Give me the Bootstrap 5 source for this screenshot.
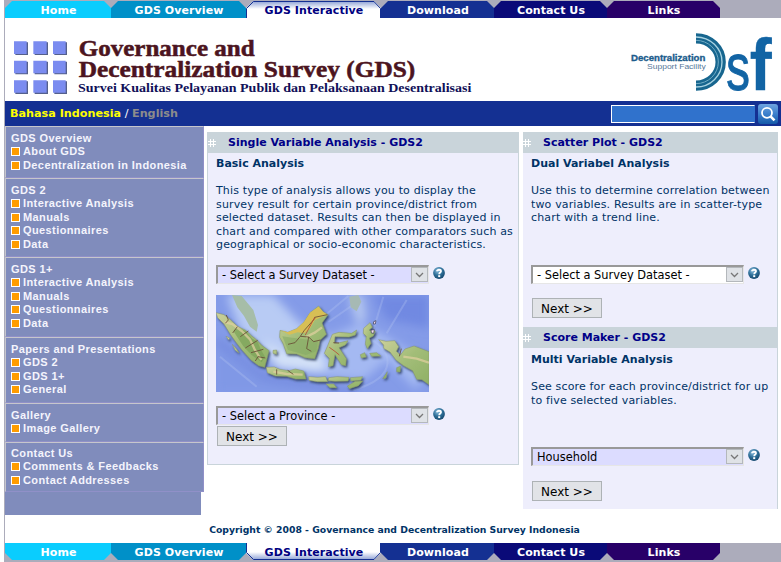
<!DOCTYPE html>
<html lang="en">
<head>
<meta charset="utf-8">
<meta name="viewport" content="width=device-width, initial-scale=1">
<title>Governance and Decentralization Survey</title>
<link rel="stylesheet" href="https://cdn.jsdelivr.net/npm/bootstrap@5.3.0/dist/css/bootstrap.min.css">
<style>
html,body{height:562px;overflow:hidden;background:#fff}
body{font-family:"DejaVu Sans",Verdana,sans-serif;font-size:11px;line-height:13.6px;color:#036}
.page{margin-left:4px;width:777px;height:562px;border-left:1px solid #acacbb}
.tabs{height:18px;background:#acacbb;padding-top:1px}
.tabs.top{height:18px}
.tabs.bottom{height:19px;padding-top:0}
.tab{height:17px;width:113px;font-weight:700;font-size:11px;line-height:19px;color:#fff;text-align:center;text-decoration:none;white-space:nowrap;letter-spacing:.08px;padding-left:1px;clip-path:polygon(0 7px,7px 0,calc(100% - 7px) 0,100% 7px,100% 100%,0 100%)}
.bottom .tab{clip-path:polygon(0 0,100% 0,100% calc(100% - 7px),calc(100% - 7px) 100%,7px 100%,0 calc(100% - 7px))}
.t1{width:106px;background:#0acdfe}.t2{width:135px;background:#0090c8}.t4{background:#143092}.t5{background:#0a0a78}.t6{background:#280068}
.t3{width:135px;color:#000080;background:linear-gradient(#8b9fd4,#fff 8px)}
.bottom .t3{background:linear-gradient(#fff 9px,#8b9fd4)}
.t3svg{position:absolute;left:0;top:0}
.head{height:83px}
.head svg{overflow:visible}
.bar{height:25px;background:#143092;font-size:11.2px}
.lang{padding:1px 0 0 5px}
.bar .yl{color:#ff0}.bar .gr{color:#8c8c8c}
.search{width:144px;height:18px;background:#3072cc;border:1px solid #fff;border-right-color:#3072cc;border-radius:0;padding:0;outline:0}
.srch{margin:0 3px}
.mid{height:389px}
.side{width:202px;font-family:"Liberation Sans",Arial,sans-serif;font-weight:700;color:#f4f4fc;letter-spacing:.4px}
.sec{width:199px;background:#808cbc;border:1px solid #c6c6cc;border-right-color:#9090c8;border-bottom:1px solid #9090c8;padding:4.500px 0 0 5px;line-height:13.600px;white-space:nowrap}
.sec a{display:flex;align-items:flex-start;color:inherit;text-decoration:none}
.sec a::before{content:"";width:9px;height:9px;margin-top:2px;border:1px solid #fff;background:#ff9c00;margin-right:3px}
.h52{height:52px}.h79{height:79px}.h80{height:80px}.h66{height:66px}.h39{height:39px}.h50{height:50px;padding-top:3.500px}
.tail{width:196px;height:23px;background:#808cbc}
.main-area{padding-top:6px}
.panel{background:#eeeefc;border:1px solid #c9d4da;border-width:0 1px 1px}
.p1{width:312px;height:333px}.p2{width:255px;border-left:0;border-bottom:0}
.p2a{height:195px}.p2b{height:182px}
.ttl{height:21px;background:#c9d4da;color:#000088;font-weight:700;font-size:11px;margin:0 -1px;padding-top:1px;line-height:20px;white-space:nowrap}
.p2 .ttl{margin:0}
.hash{width:8px;height:8px;margin:0 12px 0 1px}
.p2 .hash{margin-left:0}
.bd{padding-left:8px}
.sub{font-weight:700;font-size:11px;line-height:14px;padding-top:4px;height:31px;white-space:nowrap}
.copytext{height:81px;letter-spacing:.15px}
.p2b .sub{padding-top:5px;height:32px}
.p2b .copytext{height:67px}
.ln{display:block;white-space:nowrap}
.sel{width:213px;height:19px;border:1px solid #999;border-width:2px 1px 1px 2px;border-color:#999 #e6e6e6 #e6e6e6 #999;background:#dcdcff}
.sel.w{background:#fff}
.sel select{appearance:none;border:0;background:transparent;padding:0 0 0 4px;color:#000;font-size:11.400px;line-height:16px;height:16px;outline:0;min-width:0}
.arr{width:17px;height:15px;background:#dfe2e6;border:1px solid #b4b8bc}
.help{margin:2px 0 0 4px}
.map{margin:11px 0 14px}
.nx{width:70px;height:20px;border:1px solid #adb2b5;border-radius:0;background:#e1e3e7;color:#000;font-size:12px;line-height:18px;padding:1px 0 0;margin:1px 0 0 1px;display:block}
.nx2{margin-top:14px}
.p2b .nx2{margin-top:15px}
.copy{font-size:9.280px;font-weight:700;color:#036;white-space:nowrap;height:28px;padding:2px 0 0 3px}
</style>
<script src="https://cdn.jsdelivr.net/npm/bootstrap@5.3.0/dist/js/bootstrap.bundle.min.js"></script>
</head>
<body>
<svg width="0" height="0" class="position-absolute">
<defs>
<symbol id="hash" viewBox="0 0 8 8"><path d="M0 2.500h8M0 5.500h8M2.500 0v8M5.500 0v8" stroke="#fff" fill="none"/></symbol>
<radialGradient id="hg" cx=".4" cy=".3" r=".7"><stop offset="0" stop-color="#8fc0e0"/><stop offset=".55" stop-color="#2f7099"/><stop offset="1" stop-color="#164a70"/></radialGradient>
<symbol id="help" viewBox="0 0 12 12"><circle cx="6" cy="6" r="5.900" fill="url(#hg)"/><path d="M4 4.300C4 2.200 8 2.200 8 4.300C8 5.600 6.200 5.500 6.200 7.200" fill="none" stroke="#fff" stroke-width="1.800"/><rect x="5.200" y="8.200" width="2" height="1.900" fill="#fff"/></symbol>
<symbol id="chev" viewBox="0 0 15 13"><path d="M4 5l3.500 3.500L11 5" fill="none" stroke="#777" stroke-width="1.300"/></symbol>
</defs>
</svg>
<div class="page d-flex flex-column">
<nav class="tabs top d-flex">
<a class="tab t1">Home</a><a class="tab t2">GDS Overview</a><a class="tab t3 position-relative"><svg class="t3svg" width="135" height="17"><path d="M.5 17V7.500L7.500.5H128L134.500 7.500V17" fill="none" stroke="#143092"/></svg>GDS Interactive</a><a class="tab t4">Download</a><a class="tab t5">Contact Us</a><a class="tab t6">Links</a>
</nav>
<header class="head d-flex justify-content-between">
<svg width="475" height="83" viewBox="15 54 1425 249">
<path fill="#55608c" d="M46 127h38v38H46zM104 127h40v38h-40zM163 127h38v38h-38zM46 185h38v38H46zM104 185h40v38h-40zM163 185h38v38h-38zM46 244h38v38H46zM104 244h40v38h-40zM163 244h38v38h-38z"/>
<path fill="#7b8cf0" d="M42 124h38v38H42zM100 124h40v38h-40zM159 124h38v38h-38zM42 182h38v38H42zM100 182h40v38h-40zM159 182h38v38h-38zM42 241h38v37H42zM100 241h40v37h-40zM159 241h38v37h-38z"/>
<g font-family="Liberation Serif,Times New Roman,serif" font-weight="700">
<text x="236" y="167" font-size="68" textLength="528" lengthAdjust="spacingAndGlyphs" fill="#4c1420" stroke="#4c1420" stroke-width="1.500">Governance and</text>
<text x="236" y="231" font-size="68" textLength="1010" lengthAdjust="spacingAndGlyphs" fill="#4c1420" stroke="#4c1420" stroke-width="1.500">Decentralization Survey (GDS)</text>
<text x="234" y="276" font-size="38" textLength="1180" lengthAdjust="spacingAndGlyphs" fill="#101058">Survei Kualitas Pelayanan Publik dan Pelaksanaan Desentralisasi</text>
</g>
</svg>
<svg width="155" height="83" viewBox="735 54 465 249">
<text x="750" y="183" font-family="Liberation Sans,Arial,sans-serif" font-weight="700" font-size="26" textLength="223" lengthAdjust="spacingAndGlyphs" fill="#1c5c8c" stroke="#1c5c8c">Decentralization</text>
<text x="798" y="206" font-family="Liberation Sans,Arial,sans-serif" font-size="24" textLength="176" lengthAdjust="spacingAndGlyphs" fill="#56789a">Support Facility</text>
<g fill="none" stroke="#17668f"><path d="M945 115A74 71 0 0 1 945 257" stroke-width="31"/><path d="M945 111A78 75 0 0 1 945 261" stroke="#a9d3e2" stroke-width="4"/><path d="M945 121A67 65 0 0 1 945 251" stroke="#6fabc4" stroke-width="3"/></g>
<g font-family="Liberation Sans,Arial,sans-serif" fill="#1264a4" stroke="#1264a4"><text x="1036" y="271" font-size="200" textLength="71" lengthAdjust="spacingAndGlyphs" stroke-width="3">s</text><text x="1106" y="271" font-size="216" font-weight="700" textLength="66" lengthAdjust="spacingAndGlyphs">f</text></g>
</svg>
</header>
<div class="bar d-flex align-items-center">
<div class="fw-bold text-nowrap flex-grow-1 lang"><span class="yl">Bahasa Indonesia</span><span class="text-white fw-normal"> / </span><span class="gr">English</span></div>
<input class="search" aria-label="Search">
<svg width="20" height="20" viewBox="0 0 20 20" class="srch"><defs><linearGradient id="sg" x2="0" y2="1"><stop stop-color="#6fa4e0"/><stop offset=".5" stop-color="#3b7fcc"/><stop offset="1" stop-color="#145aa8"/></linearGradient></defs><rect width="20" height="20" rx="3" fill="url(#sg)"/><circle cx="9" cy="8.800" r="5" fill="none" stroke="#fff" stroke-width="1.800"/><path d="M12.500 12.300l4 4" stroke="#fff" stroke-width="2.600"/></svg>
</div>
<div class="d-flex mid">
<aside class="side">
<div class="sec h52">GDS Overview<a>About GDS</a><a>Decentralization in Indonesia</a></div>
<div class="sec h79">GDS 2<a>Interactive Analysis</a><a>Manuals</a><a>Questionnaires</a><a>Data</a></div>
<div class="sec h80">GDS 1+<a>Interactive Analysis</a><a>Manuals</a><a>Questionnaires</a><a>Data</a></div>
<div class="sec h66">Papers and Presentations<a>GDS 2</a><a>GDS 1+</a><a>General</a></div>
<div class="sec h39">Gallery<a>Image Gallery</a></div>
<div class="sec h50">Contact Us<a>Comments &amp; Feedbacks</a><a>Contact Addresses</a></div>
<div class="tail"></div>
</aside>
<main class="d-flex gap-1 align-items-start main-area">
<section class="panel p1">
<div class="ttl d-flex align-items-center"><svg class="hash"><use href="#hash"/></svg>Single Variable Analysis - GDS2</div>
<div class="bd">
<div class="sub">Basic Analysis</div>
<div class="copytext"><span class="ln">This type of analysis allows you to display the</span><span class="ln">survey result for certain province/district from</span><span class="ln">selected dataset. Results can then be displayed in</span><span class="ln">chart and compared with other comparators such as</span><span class="ln">geographical or socio-economic characteristics.</span></div>
<div class="d-flex"><div class="sel d-flex"><select class="flex-grow-1"><option>- Select a Survey Dataset -</option></select><svg class="arr"><use href="#chev"/></svg></div><svg width="12" height="12" class="help"><use href="#help"/></svg></div>
<svg width="213" height="97" viewBox="48 45 639 291" preserveAspectRatio="none" class="d-block map">
<defs><filter id="b" x="-20%" y="-20%" width="140%" height="140%"><feGaussianBlur stdDeviation="14"/></filter>
<filter id="ds" x="-10%" y="-10%" width="125%" height="125%"><feDropShadow dx="4" dy="5" stdDeviation="3" flood-color="#253556" flood-opacity=".85"/></filter>
<linearGradient id="land" x2="1" y2="1"><stop stop-color="#cdd09a"/><stop offset=".5" stop-color="#a2bd78"/><stop offset="1" stop-color="#8fb065"/></linearGradient></defs>
<rect x="48" y="45" width="639" height="291" fill="#849be8"/>
<g filter="url(#b)"><path d="M80 45L220 45L300 130L375 160L420 260L350 280L230 260L120 150Z" fill="#b8cbf4"/><path d="M190 180L250 220L380 230L400 280L230 265Z" fill="#d4e2f8"/><path d="M360 180L480 130L560 170L687 250L650 330L560 240L490 300L380 290Z" fill="#a4b9f2"/><path d="M445 45L490 45L500 120L470 130Z" fill="#b4c6f0"/><path d="M520 45h167v100L560 120Z" fill="#7189e2"/><path d="M48 160L180 270L340 336H48Z" fill="#8098e6"/><path d="M48 180L190 290L470 336" fill="none" stroke="#6e84dc" stroke-width="14"/></g>
<path d="M370 110L445 48M385 126L480 60M520 150L550 50M560 160L620 60M460 330C600 290 580 210 500 170M60 230L170 320" fill="none" stroke="#b7c7f3" stroke-width="6" opacity=".3"/>
<path d="M96 45L125 48L160 90L174 135L170 155L150 140L132 108L112 82Z" fill="#a6bda8"/>
<path d="M448 50L475 45L484 65L470 94L452 82Z" fill="#a6b9b4"/>
<g filter="url(#ds)" fill="url(#land)" stroke="#84946a" stroke-width="1.500">
<path d="M48 98L72 104L92 120L112 139L137 151L155 168L167 177L185 196L207 212L202 232L194 262L176 257L153 240L126 210L108 187L91 163L72 132L53 113Z"/>
<path d="M240 151L263 157L290 146L312 126L330 98L356 78L369 95L384 104L366 129L379 163L360 181L355 205L344 236L315 233L290 222L260 221L249 190L239 172Z"/>
<path d="M199 262L223 261L239 268L267 272L286 267L311 273L318 297L287 297L260 289L226 288L202 278Z"/>
<path d="M326 290L353 292L377 290L383 305L353 305L327 301ZM386 293L411 290L447 292L444 303L405 304L385 302ZM451 293L488 290L482 301L453 303ZM442 318L466 304L488 303L475 317L448 326ZM378 312L401 312L410 323L390 323Z"/>
<path d="M397 163L417 157L455 160L470 150L466 165L447 171L405 170L403 190L414 189L444 182L436 195L417 203L439 236L437 257L424 254L405 224L399 257L385 260L388 235L373 220L383 197Z"/>
<path d="M491 145L510 128L517 142L507 151L526 153L520 168L508 174L513 190L502 206L496 192L499 169L490 160Z"/>
<path d="M536 179L558 184L584 182L596 200L589 214L601 225L615 207L642 198L687 215V314L666 299L650 298L638 272L611 257L588 240L570 216L551 205L551 195Z"/>
<path d="M481 224L494 218L499 231L484 234ZM509 220L530 218L542 228L515 229ZM590 263L602 258L600 276L590 275ZM548 296L562 275L558 294ZM219 211L230 210V223L219 220ZM97 193L110 208L117 219L105 210ZM78 169L89 174L86 180Z"/>
</g>
<path d="M242 151L263 157L290 146L312 126L330 98L356 80L369 95L382 104L360 113L344 121L329 147L313 160L293 157L268 164Z" fill="#d8bf55"/>
<path d="M100 153L112 142L137 152L157 176L173 185L182 208L195 230L185 247L155 225L130 199Z" fill="#7ca35a" opacity=".75"/>
<path d="M247 169L276 173L304 176L354 184L349 214L318 225L264 210Z" fill="#86aa65" opacity=".6"/>
<path d="M74 126L97 132L125 153L150 178L164 208L184 240M610 230L650 236L687 248M220 275L260 282L308 284M318 171L344 158L366 142" fill="none" stroke="#ddcf9d" stroke-width="7" opacity=".75"/>
<g fill="none" stroke="#684b34" stroke-width="2.500"><path d="M79 105L85 120L76 130M112 140L98 159M121 170L145 153M136 204L173 181M153 218L190 208M166 243L174 230L196 234M264 193L285 188L301 169L326 171L341 185L361 180M301 169L313 151L344 116L344 112L382 104M326 171L320 206L334 214M263 271L280 283M230 268V284M604 206L598 229M400 188L417 189"/><path d="M388 202L406 215L418 225M344 112L316 165" stroke="#b94934"/></g>
<path d="M521 125L528 122L526 132L520 132ZM513 150L523 149L521 160L514 159Z" fill="#f4ddec" stroke="#343750" stroke-width="2"/>
</svg>
<div class="d-flex"><div class="sel d-flex"><select class="flex-grow-1"><option>- Select a Province -</option></select><svg class="arr"><use href="#chev"/></svg></div><svg width="12" height="12" class="help"><use href="#help"/></svg></div>
<button class="nx">Next &gt;&gt;</button>
</div>
</section>
<div>
<section class="panel p2 p2a">
<div class="ttl d-flex align-items-center"><svg class="hash"><use href="#hash"/></svg>Scatter Plot - GDS2</div>
<div class="bd">
<div class="sub">Dual Variabel Analysis</div>
<div class="copytext"><span class="ln">Use this to determine correlation between</span><span class="ln">two variables. Results are in scatter-type</span><span class="ln">chart with a trend line.</span></div>
<div class="d-flex"><div class="sel w d-flex"><select class="flex-grow-1"><option>- Select a Survey Dataset -</option></select><svg class="arr"><use href="#chev"/></svg></div><svg width="12" height="12" class="help"><use href="#help"/></svg></div>
<button class="nx nx2">Next &gt;&gt;</button>
</div>
</section>
<section class="panel p2 p2b">
<div class="ttl d-flex align-items-center"><svg class="hash"><use href="#hash"/></svg>Score Maker - GDS2</div>
<div class="bd">
<div class="sub">Multi Variable Analysis</div>
<div class="copytext"><span class="ln">See score for each province/district for up</span><span class="ln">to five selected variables.</span></div>
<div class="d-flex"><div class="sel d-flex"><select class="flex-grow-1"><option>Household</option></select><svg class="arr"><use href="#chev"/></svg></div><svg width="12" height="12" class="help"><use href="#help"/></svg></div>
<button class="nx nx2">Next &gt;&gt;</button>
</div>
</section>
</div>
</main>
</div>
<footer>
<div class="copy d-flex align-items-center justify-content-center">Copyright © 2008 - Governance and Decentralization Survey Indonesia</div>
<nav class="tabs bottom d-flex">
<a class="tab t1">Home</a><a class="tab t2">GDS Overview</a><a class="tab t3 position-relative"><svg class="t3svg" width="135" height="17"><path d="M.5 0V9.500L7.500 16.500H128L134.500 9.500V0" fill="none" stroke="#143092"/></svg>GDS Interactive</a><a class="tab t4">Download</a><a class="tab t5">Contact Us</a><a class="tab t6">Links</a>
</nav>
</footer>
</div>
</body>
</html>
